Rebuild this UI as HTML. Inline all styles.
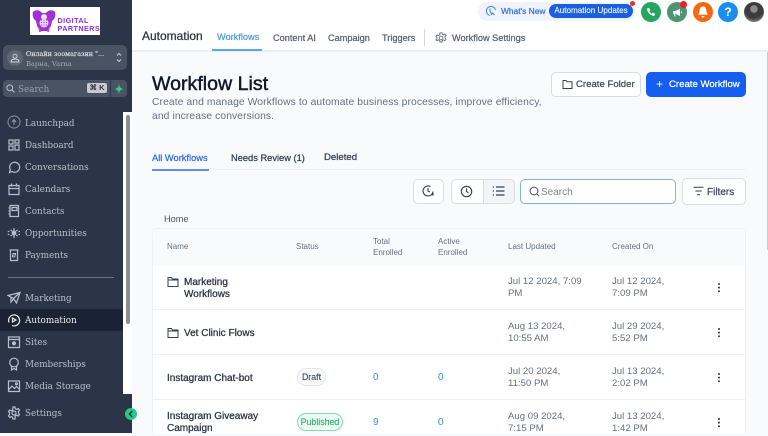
<!DOCTYPE html>
<html><head><meta charset="utf-8"><style>
*{box-sizing:border-box}
html,body{margin:0;padding:0;width:768px;height:433px;overflow:hidden;background:#f9fafb;font-family:"Liberation Sans",sans-serif}
.a{position:absolute;white-space:nowrap}
.m{-webkit-text-stroke:.25px currentColor}
.nav{position:absolute;left:25px;font:8.8px/12px "DejaVu Serif",serif;color:#b9c0cb;white-space:nowrap}
.ic{position:absolute;left:7px;width:14px;height:14px;fill:none;stroke:#b9c0cb;stroke-width:1.2}
.t{position:absolute;white-space:nowrap;font-size:8px;color:#667085}
.n{position:absolute;left:167px;white-space:nowrap;font-size:10px;line-height:12.4px;color:#2f3746;-webkit-text-stroke:.3px currentColor}
.d{position:absolute;white-space:nowrap;font-size:9.6px;line-height:12.2px;color:#667085}
.b{position:absolute;font-size:10px;color:#3b92d6;white-space:nowrap}
.hr{position:absolute;left:153px;width:592px;height:1px;background:#f0f1f4}
.dots{position:absolute;left:718px;width:2px;height:2px;background:#2f3746;border-radius:50%;box-shadow:0 3.6px 0 #2f3746,0 7.2px 0 #2f3746}
.btn{position:absolute;background:#fff;border:1px solid #d9dde3;border-radius:5px}
.circ{position:absolute;top:2px;width:20px;height:20px;border-radius:50%}
</style></head><body>

<!-- main header -->
<div class="a" style="left:132px;top:0;width:636px;height:52px;background:#fff;border-bottom:2px solid #eceef1"></div>
<div class="a m" style="left:142px;top:29px;font-size:12px;line-height:15px;color:#2a3342">Automation</div>
<div class="a m" style="left:217px;top:31px;font-size:9.2px;line-height:12px;color:#4f9edc">Workflows</div>
<div class="a" style="left:212px;top:49px;width:50px;height:1.5px;background:#5aa6e0"></div>
<div class="a m" style="left:273px;top:32px;font-size:9.2px;line-height:12px;color:#5a6473">Content AI</div>
<div class="a m" style="left:328px;top:32px;font-size:9.2px;line-height:12px;color:#5a6473">Campaign</div>
<div class="a m" style="left:382px;top:32px;font-size:9.2px;line-height:12px;color:#5a6473">Triggers</div>
<div class="a" style="left:424px;top:29px;width:1px;height:17px;background:#d5d8dd"></div>
<svg class="a" style="left:435px;top:32px" width="12" height="12" viewBox="0 0 12 12" fill="none" stroke="#667085" stroke-width=".9"><circle cx="6" cy="6" r="1.8"/><path d="M5 .8h2l.3 1.500 1.300.6 1.300-.8 1.100 1.500-1 1.100v1.400l1 1.100-1.100 1.500-1.300-.8-1.300.6-.3 1.500H5l-.3-1.500-1.300-.6-1.300.8L1 7.900l1-1.100V5.400l-1-1.100 1.100-1.500 1.300.8 1.300-.6z"/></svg>
<div class="a m" style="left:452px;top:32px;font-size:9.2px;line-height:12px;color:#5a6473">Workflow Settings</div>

<!-- top right -->
<div class="a" style="left:478px;top:2px;width:158px;height:19px;border-radius:10px;background:#eef3fd"></div>
<svg class="a" style="left:485px;top:5px" width="12" height="12" viewBox="0 0 12 12" fill="none" stroke="#3f7fe8" stroke-width="1"><path d="M5 10.500A4.600 4.600 0 1 1 10.500 5"/><path d="M5 3.500v2.500M5 5.500l1.500 4 1-1.500 2 2"/></svg>
<div class="a m" style="left:501px;top:5px;font-size:8.4px;line-height:12px;color:#3b72e0">What's New</div>
<div class="a m" style="left:549px;top:4px;width:84px;height:14px;border-radius:7px;background:#1a5fdd;color:#e8f0ff;font-size:8.1px;line-height:14px;text-align:center;-webkit-text-stroke-width:.15px">Automation Updates</div>
<div class="a" style="left:630px;top:1px;width:5px;height:5px;border-radius:50%;background:#ef2b2b"></div>
<div class="circ" style="left:641px;background:#25a55f"></div>
<svg class="a" style="left:646px;top:7px" width="10" height="10" viewBox="0 0 10 10"><path fill="#fff" d="M1 1.500 3 .8l1.300 2.400-1 1c.5 1 1.300 1.800 2.400 2.400l1-1 2.400 1.300-.7 2C4.800 9 1.200 5.500 1 1.500z"/></svg>
<div class="circ" style="left:667px;background:#4f9274"></div>
<svg class="a" style="left:672px;top:7px" width="11" height="11" viewBox="0 0 11 11"><path fill="#fff" d="M1 4h2.500L8 1.500v7.500L3.500 6.800H3l.7 2.700H2.500L1.800 6.800H1zM9 4l1.200 1.200L9 6.500z"/></svg>
<div class="a" style="left:680px;top:1px;width:7px;height:7px;border-radius:50%;background:#ea2027"></div>
<div class="circ" style="left:693px;background:#f7670f"></div>
<svg class="a" style="left:698px;top:6px" width="10" height="12" viewBox="0 0 10 12"><path fill="#fff" d="M5 .5c2.200 0 3.300 1.700 3.300 3.700 0 2 .7 3 1.400 3.900v.7H.3v-.7C1 7.200 1.700 6.200 1.700 4.200 1.700 2.200 2.800.5 5 .5zM3.500 10h3c0 1-.7 1.500-1.500 1.500S3.500 11 3.500 10z"/></svg>
<div class="circ" style="left:718px;background:#1b8cf0"></div>
<div class="a" style="left:718px;top:5px;width:20px;text-align:center;color:#fff;font-size:12px;line-height:14px;font-weight:bold">?</div>
<div class="a" style="left:744px;top:2px;width:20px;height:20px;border-radius:50%;background:radial-gradient(circle at 50% 35%,#8a8a88 0 22%,#3c3c3c 24% 55%,#777 75%)"></div>

<!-- content head -->
<div class="a" style="left:152px;top:71px;font-size:19.6px;line-height:26px;color:#101828;-webkit-text-stroke:.45px currentColor">Workflow List</div>
<div class="a" style="left:152px;top:95.5px;font-size:10.3px;line-height:14px;color:#667085;letter-spacing:.1px">Create and manage Workflows to automate business processes, improve efficiency,<br>and increase conversions.</div>
<div class="btn" style="left:551px;top:72px;width:90px;height:25px;border-radius:5px"></div>
<svg class="a" style="left:562px;top:79px" width="11" height="11" viewBox="0 0 11 11" fill="none" stroke="#344054"><path d="M1 9.500v-8h3l1 1.300h5v6.700z"/></svg>
<div class="a m" style="left:576px;top:78px;font-size:9.6px;line-height:13px;color:#414b5a">Create Folder</div>
<div class="a" style="left:646px;top:72px;width:100px;height:25px;border-radius:5px;background:#155eef"></div>
<div class="a" style="left:656px;top:78px;font-size:12px;line-height:13px;color:#fff">+</div>
<div class="a m" style="left:669px;top:78px;font-size:9.6px;line-height:13px;color:#fff">Create Workflow</div>

<!-- tabs -->
<div class="a m" style="left:152px;top:152px;font-size:9.3px;line-height:12px;color:#2f6fee">All Workflows</div>
<div class="a m" style="left:231px;top:152px;font-size:9.3px;line-height:12px;color:#344054">Needs Review (1)</div>
<div class="a m" style="left:324px;top:152px;font-size:9.6px;line-height:12px;color:#344054">Deleted</div>
<div class="a" style="left:152px;top:169px;width:594px;height:1px;background:#f0f1f4"></div>
<div class="a" style="left:152px;top:169px;width:57px;height:1.5px;background:#5b8ff5"></div>

<!-- toolbar -->
<div class="btn" style="left:413px;top:179px;width:31px;height:25px"></div>
<svg class="a" style="left:422px;top:185px" width="12" height="12" viewBox="0 0 12 12" fill="none" stroke="#344054" stroke-width="1.100"><path d="M11 6.500A5 5 0 1 1 8.500 1.600M6 3v3l2 1M9.500 8.500l1.500 1.500M11 8v2H9"/></svg>
<div class="btn" style="left:451px;top:179px;width:64px;height:25px"></div>
<div class="a" style="left:483px;top:180px;width:31px;height:23px;background:#f2f4f7;border-left:1px solid #d9dde3;border-radius:0 4px 4px 0"></div>
<svg class="a" style="left:460px;top:185px" width="13" height="13" viewBox="0 0 13 13" fill="none" stroke="#344054" stroke-width="1.100"><circle cx="6.500" cy="6.500" r="5.200"/><path d="M6.500 3.200v3.300l2 1.300"/></svg>
<svg class="a" style="left:492px;top:185px" width="13" height="12" viewBox="0 0 13 12" fill="none" stroke="#344054" stroke-width="1.200"><path d="M4 2h8.500M4 6h8.500M4 10h8.500M.8 2h1.200M.8 6h1.200M.8 10h1.200"/></svg>
<div class="a" style="left:520px;top:179px;width:156px;height:25px;background:#fff;border:1px solid #84adf2;border-radius:5px"></div>
<svg class="a" style="left:529px;top:186px" width="11" height="11" viewBox="0 0 11 11" fill="none" stroke="#475467" stroke-width="1"><circle cx="5" cy="5" r="3.900"/><path d="M8 8l2.200 2.200"/></svg>
<div class="a" style="left:541px;top:186px;font-size:10px;line-height:13px;color:#7a8494">Search</div>
<div class="btn" style="left:682px;top:178px;width:64px;height:27px"></div>
<svg class="a" style="left:693px;top:186px" width="11" height="10" viewBox="0 0 11 10" fill="none" stroke="#344054" stroke-width="1"><path d="M.5 1.200h10M2.300 5h6.400M4 8.800h3"/></svg>
<div class="a m" style="left:707px;top:185.500px;font-size:10px;line-height:13px;color:#414b5a">Filters</div>

<div class="a" style="left:164px;top:213px;font-size:9.2px;line-height:13px;color:#475467">Home</div>

<!-- table -->
<div class="a" style="left:152px;top:228px;width:594px;height:205px;background:#fff;border:1px solid #f0f1f4;border-radius:5px 5px 0 0;border-bottom:0"></div>
<div class="a" style="left:153px;top:229px;width:592px;height:37px;background:#f9fafb;border-radius:5px 5px 0 0"></div>
<div class="t" style="left:167px;top:241px;line-height:11px">Name</div>
<div class="t" style="left:296px;top:241px;line-height:11px">Status</div>
<div class="t" style="left:373px;top:236px;line-height:11px">Total<br>Enrolled</div>
<div class="t" style="left:438px;top:236px;line-height:11px">Active<br>Enrolled</div>
<div class="t" style="left:508px;top:241px;line-height:11px">Last Updated</div>
<div class="t" style="left:612px;top:241px;line-height:11px">Created On</div>

<div class="hr" style="top:309px"></div>
<div class="hr" style="top:354px"></div>
<div class="hr" style="top:399px"></div>

<svg class="a" style="left:167px;top:276px" width="12" height="12" viewBox="0 0 12 12" fill="none" stroke="#344054"><path d="M1 10.500v-9h3.500l1 1.500h5.500v7.500zM1 4h10"/></svg>
<div class="n" style="left:184px;top:276.500px">Marketing<br>Workflows</div>
<div class="d" style="left:508px;top:276px">Jul 12 2024, 7:09<br>PM</div>
<div class="d" style="left:612px;top:276px">Jul 12 2024,<br>7:09 PM</div>
<div class="dots" style="top:283px"></div>

<svg class="a" style="left:167px;top:327px" width="12" height="12" viewBox="0 0 12 12" fill="none" stroke="#344054"><path d="M1 10.500v-9h3.500l1 1.500h5.500v7.500zM1 4h10"/></svg>
<div class="n" style="left:184px;top:328px">Vet Clinic Flows</div>
<div class="d" style="left:508px;top:321px">Aug 13 2024,<br>10:55 AM</div>
<div class="d" style="left:612px;top:321px">Jul 29 2024,<br>5:52 PM</div>
<div class="dots" style="top:328px"></div>

<div class="n" style="top:373px">Instagram Chat-bot</div>
<div class="a m" style="left:297px;top:368px;width:29px;height:18px;border:1px solid #e4e6ea;border-radius:9px;background:#f9fafb;font-size:8.8px;line-height:16px;text-align:center;color:#475467;-webkit-text-stroke-width:.15px">Draft</div>
<div class="b" style="left:373px;top:372px;line-height:12px">0</div>
<div class="b" style="left:438px;top:372px;line-height:12px">0</div>
<div class="d" style="left:508px;top:366px">Jul 20 2024,<br>11:50 PM</div>
<div class="d" style="left:612px;top:366px">Jul 13 2024,<br>2:02 PM</div>
<div class="dots" style="top:373px"></div>

<div class="n" style="top:411px">Instagram Giveaway<br>Campaign</div>
<div class="a m" style="left:297px;top:413px;width:46px;height:18px;border:1px solid #7fdcae;border-radius:9px;background:#edfcf3;font-size:8.8px;line-height:16px;text-align:center;color:#27b56f;-webkit-text-stroke-width:.15px">Published</div>
<div class="b" style="left:373px;top:417px;line-height:12px">9</div>
<div class="b" style="left:438px;top:417px;line-height:12px">0</div>
<div class="d" style="left:508px;top:411px">Aug 09 2024,<br>7:15 PM</div>
<div class="d" style="left:612px;top:411px">Jul 13 2024,<br>1:42 PM</div>
<div class="dots" style="top:418px"></div>

<div class="a" style="left:767px;top:52px;width:1px;height:198px;background:#c9cbd0"></div>

<!-- sidebar -->
<div class="a" style="left:0;top:0;width:132px;height:112px;background:#2c3547"></div>
<div class="a" style="left:0;top:112px;width:123px;height:321px;background:#2c3547"></div>
<div class="a" style="left:123px;top:394px;width:9px;height:39px;background:#2c3547"></div>
<div class="a" style="left:123px;top:112px;width:9px;height:282px;background:#fff"></div>
<div class="a" style="left:126px;top:115px;width:4px;height:209px;background:#8b8d90;border-radius:2px"></div>

<!-- logo -->
<div class="a" style="left:30px;top:7px;width:70px;height:28px;background:#fff"></div>
<svg class="a" style="left:32px;top:9px" width="24" height="24" viewBox="0 0 24 24"><path fill="#a02fd6" d="M1 3c3-3 7-2 9 1h4c2-3 6-4 9-1 1 3 0 7-3 9l-1 5-3 5h-8l-3-5-1-5C1 10 0 6 1 3z"/><circle cx="12" cy="8" r="3" fill="#efe0f8"/><circle cx="12" cy="14" r="4.500" fill="#e9d4f7"/><path fill="#e23fb8" d="M6 16l3 7H7zM18 16l-3 7h2z"/><path stroke="#9a3ad0" stroke-dasharray="1 1.500" d="M9 11h6M9 13.500h6M9 16h6"/></svg>
<div class="a" style="left:57.500px;top:17px;font-size:7.200px;line-height:7.500px;font-weight:bold;color:#8a32d8;letter-spacing:.45px">DIGITAL<br>PARTNERS</div>

<!-- account -->
<div class="a" style="left:3px;top:45px;width:124px;height:25px;background:#4a5361;border-radius:5px"></div>
<div class="a" style="left:7px;top:50px;width:16px;height:16px;border-radius:50%;background:#5f6773"></div>
<svg class="a" style="left:10px;top:53px" width="10" height="10" viewBox="0 0 10 10" fill="none" stroke="#d3d6db" stroke-width=".9"><circle cx="5" cy="3.200" r="2"/><path d="M1 9c0-2 1.500-3 4-3s4 1 4 3z"/></svg>
<div class="a m" style="left:26px;top:49px;font:6.4px/10px 'DejaVu Serif',serif;color:#e1e3e6;-webkit-text-stroke-width:.15px">Онлайн зоомагазин "...</div>
<div class="a" style="left:26px;top:58.500px;font:6.700px/11px 'DejaVu Serif',serif;color:#a6acb5">Варна, Varna</div>
<svg class="a" style="left:116px;top:52px" width="6" height="11" viewBox="0 0 6 11" fill="none" stroke="#cfd2d7"><path d="M1 3.500L3 1.500l2 2M1 7.500l2 2 2-2"/></svg>

<!-- search -->
<div class="a" style="left:3px;top:80px;width:107px;height:17px;background:#4a5361;border-radius:4px 0 0 4px"></div>
<div class="a" style="left:111px;top:80px;width:16px;height:17px;background:#4a5361;border-radius:0 4px 4px 0"></div>
<svg class="a" style="left:6px;top:84px" width="9" height="9" viewBox="0 0 9 9" fill="none" stroke="#bcc1c9"><circle cx="3.800" cy="3.800" r="2.900"/><path d="M6 6l2.500 2.500"/></svg>
<div class="a" style="left:18px;top:82.500px;font:8.800px/14px 'DejaVu Serif',serif;color:#98a0ab">Search</div>
<div class="a" style="left:87px;top:83px;width:20px;height:10px;background:#c7cacf;border-radius:2px;font-size:7.500px;line-height:10px;font-weight:bold;text-align:center;color:#333b49">⌘ K</div>
<svg class="a" style="left:115px;top:84px" width="8" height="10" viewBox="0 0 8 10"><path fill="#2fd08a" d="M4 0l.8 3.200L8 5 4.800 6.800 4 10l-.8-3.200L0 5l3.200-1.800z"/></svg>

<!-- nav -->
<svg class="ic" style="top:115px"><circle cx="7" cy="7" r="6" stroke="#7c838f"/><path d="M7 10V5M5 7l2-2.500L9 7" stroke="#8a919c"/></svg>
<div class="nav" style="top:117.500px">Launchpad</div>
<svg class="ic" style="top:138px"><path d="M2 2h4v4H2zM8 2h4v3H8zM2 8h4v4H2zM8 7h4v5H8z"/></svg>
<div class="nav" style="top:139.500px">Dashboard</div>
<svg class="ic" style="top:160px"><path d="M2.500 12.500l.8-2.800A5 5 0 1 1 5 11.500z"/></svg>
<div class="nav" style="top:161.500px">Conversations</div>
<svg class="ic" style="top:182px"><path d="M2 3.500h10v9H2zM2 6.500h10M4.500 1.500v3M9.500 1.500v3"/></svg>
<div class="nav" style="top:183.500px">Calendars</div>
<svg class="ic" style="top:204px"><path d="M3 1.500h8.500v11H3zM1.500 4h2M1.500 7h2M1.500 10h2M5 3.500h5v3H5z"/></svg>
<div class="nav" style="top:206px">Contacts</div>
<svg class="ic" style="top:226px"><circle cx="7" cy="7" r="1.800" fill="#b9c0cb"/><path d="M7 2v3M7 9v3M5 5L3.500 4M9 5l1.500-1M5 9l-1.500 1M9 9l1.500 1M.8 5.500h1.500M.8 8.500h1.500M11.500 5.500h1.500M11.500 8.500h1.500"/></svg>
<div class="nav" style="top:228px">Opportunities</div>
<svg class="ic" style="top:248px"><path d="M2.500 2h9M3.500 2v10.500h7V2"/><path d="M5.500 5.500h3v1.500h-3v1.800h3" stroke-width="1"/></svg>
<div class="nav" style="top:250px">Payments</div>

<div class="a" style="left:8px;top:277px;width:106px;height:1px;background:#6a7280"></div>

<svg class="ic" style="top:291px"><path d="M1 4.500l12-3-3.500 10.500-3-4.500zM6.500 7.500L13 1.500M4 6v5l2.500-3"/></svg>
<div class="nav" style="top:292.500px">Marketing</div>
<div class="a" style="left:0;top:309px;width:123px;height:22px;background:#1b2233;border-radius:0 3px 3px 0"></div>
<svg class="ic" style="top:313px;stroke:#e7e9ec"><path d="M2 9.500A5.500 5.500 0 1 1 5 12.500M2 7H1"/><path d="M5.500 5v4l3.500-2z"/></svg>
<div class="nav" style="top:314.500px;color:#eceef1">Automation</div>
<svg class="ic" style="top:335px"><path d="M1.500 2h11v10.500h-11zM1.500 4.500h11"/><circle cx="7" cy="8.300" r="1.500" fill="#b9c0cb"/></svg>
<div class="nav" style="top:336.500px">Sites</div>
<svg class="ic" style="top:357px"><circle cx="7" cy="5.500" r="4.300"/><path d="M4.500 9v4l2.500-1.500L9.500 13V9"/></svg>
<div class="nav" style="top:358.500px">Memberships</div>
<svg class="ic" style="top:379px"><path d="M1.500 2h11v10.500h-11zM1.500 11l3.500-4 2.500 2.500 2-2 3 3"/><circle cx="9.500" cy="4.800" r="1" /></svg>
<div class="nav" style="top:380.500px">Media Storage</div>
<svg class="ic" style="top:406px"><circle cx="7" cy="7" r="2"/><path d="M6 1h2l.3 1.700 1.500.7 1.500-.9 1.200 1.700-1.100 1.300v1.600l1.100 1.300-1.200 1.700-1.500-.9-1.500.7L8 13H6l-.3-1.700-1.500-.7-1.500.9L1.500 9.800l1.100-1.300V6.900L1.500 5.600 2.700 3.900l1.500.9 1.500-.7z"/></svg>
<div class="nav" style="top:407.500px">Settings</div>

<div class="a" style="left:125px;top:408px;width:12px;height:12px;border-radius:50%;background:#22c98a"></div>
<svg class="a" style="left:127px;top:410px" width="8" height="8" viewBox="0 0 8 8" fill="none" stroke="#12394a" stroke-width="1.600"><path d="M5.200 1 2.500 4l2.700 3"/></svg>

</body></html>
